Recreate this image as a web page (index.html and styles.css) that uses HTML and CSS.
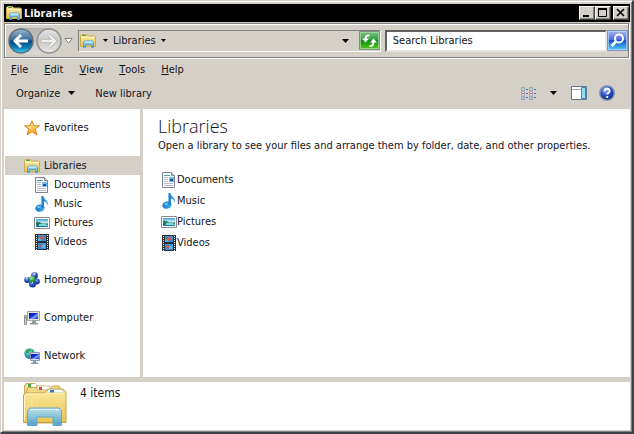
FILE: index.html
```html
<!DOCTYPE html>
<html lang="en">
<head>
<meta charset="utf-8">
<title>Libraries</title>
<link rel="stylesheet" href="styles.css">
</head>
<body>
<svg class="defs" aria-hidden="true">
  <defs>
    <linearGradient id="gold" x1="0" y1="0" x2="0" y2="1"><stop offset="0" stop-color="#fbeaa0"/><stop offset="1" stop-color="#e8c552"/></linearGradient>
    <linearGradient id="stand" x1="0" y1="0" x2="0" y2="1"><stop offset="0" stop-color="#b9e2f5"/><stop offset="1" stop-color="#3f9fd3"/></linearGradient>
    <linearGradient id="note" x1="0" y1="0" x2="1" y2="0"><stop offset="0" stop-color="#1878c8"/><stop offset="1" stop-color="#46b4f4"/></linearGradient>
    <linearGradient id="sky" x1="0" y1="0" x2="0" y2="1"><stop offset="0" stop-color="#3f9fdc"/><stop offset=".5" stop-color="#d8f4fa"/><stop offset=".6" stop-color="#2e8a6c"/><stop offset="1" stop-color="#1478a0"/></linearGradient>
    <linearGradient id="star" x1="0" y1="0" x2="0" y2="1"><stop offset="0" stop-color="#fff0a0"/><stop offset="1" stop-color="#fb9a18"/></linearGradient>
    <linearGradient id="backTop" x1="0" y1="0" x2="0" y2="1"><stop offset="0" stop-color="#9ab4cc"/><stop offset=".45" stop-color="#3a6e9c"/><stop offset=".5" stop-color="#084880"/><stop offset=".75" stop-color="#0878b4"/><stop offset="1" stop-color="#3cd0f4"/></linearGradient>
    <linearGradient id="fwdTop" x1="0" y1="0" x2="0" y2="1"><stop offset="0" stop-color="#e4e4e4"/><stop offset=".5" stop-color="#c8c8c6"/><stop offset="1" stop-color="#eae8e4"/></linearGradient>
    <linearGradient id="green" x1="0" y1="0" x2="0" y2="1"><stop offset="0" stop-color="#7cc088"/><stop offset=".45" stop-color="#30a040"/><stop offset=".5" stop-color="#0c8a14"/><stop offset="1" stop-color="#58cc20"/></linearGradient>
    <linearGradient id="find" x1="0" y1="0" x2="0" y2="1"><stop offset="0" stop-color="#b0b8f4"/><stop offset=".45" stop-color="#5070dc"/><stop offset=".5" stop-color="#1450cc"/><stop offset="1" stop-color="#50d4fc"/></linearGradient>
    <radialGradient id="ball" cx=".4" cy=".3" r=".7"><stop offset="0" stop-color="#a0b8f8"/><stop offset=".5" stop-color="#2c54c8"/><stop offset="1" stop-color="#102c88"/></radialGradient>
    <radialGradient id="leaf" cx=".4" cy=".3" r=".7"><stop offset="0" stop-color="#c0f4b0"/><stop offset=".5" stop-color="#30a848"/><stop offset="1" stop-color="#107030"/></radialGradient>
    <radialGradient id="earth" cx=".4" cy=".3" r=".7"><stop offset="0" stop-color="#c8f4ff"/><stop offset=".6" stop-color="#3098e0"/><stop offset="1" stop-color="#1050a0"/></radialGradient>
    <linearGradient id="screen" x1="0" y1="0" x2="1" y2="1"><stop offset="0" stop-color="#0818a0"/><stop offset=".45" stop-color="#1430d0"/><stop offset=".6" stop-color="#80a4f8"/><stop offset="1" stop-color="#1830c0"/></linearGradient>
  </defs>
  <symbol id="i-library" viewBox="0 0 16 14">
    <path d="M.5 12.500V1.500L1.500.5h5l1 1.500h7l1 1V12.500z" fill="url(#gold)" stroke="#c8a850"/>
    <path d="M2 1.500h4" stroke="#3cb43c"/><path d="M7 3.500h8M1 3.500h5" stroke="#fff8d0"/>
    <path d="M3.500 13.500V8.500l1-1.500h8l1 1.500v5h-2v-3h-6v3z" fill="url(#stand)" stroke="#48a4dc"/>
    <path d="M5 8h7" stroke="#e0f4fc"/>
  </symbol>
  <symbol id="i-doc" viewBox="0 0 16 16">
    <path d="M1.500.5h9l3 3v12h-12z" fill="#fff" stroke="#808488"/><path d="M10.500.5v3h3" fill="#e0e4e8" stroke="#808488"/>
    <path d="M3 3.500h6" stroke="#48a0a0"/><path d="M3 5.500h4M3 7.500h4M3 9.500h4M3 11.500h9M3 13.500h9" stroke="#b8b8d4"/>
    <path d="M8 5h5v5H8z" fill="#78b8e4"/><path d="M9 7h3v2H9z" fill="#2050a0"/>
  </symbol>
  <symbol id="i-music" viewBox="0 0 16 16">
    <ellipse cx="6" cy="12" rx="4.700" ry="3.700" transform="rotate(-15 6 12)" fill="url(#note)"/>
    <path d="M7.500 0h2c0 3.500 5.500 4.500 4.500 10-.4-2.500-2-4-4-4.400V12H7.500z" fill="url(#note)"/><ellipse cx="5" cy="11" rx="2" ry="1" fill="#78c4f4"/>
  </symbol>
  <symbol id="i-pic" viewBox="0 0 16 14">
    <path d="M.5 1.500h15v11H.5z" fill="#fff" stroke="#888c94"/><path d="M2 3h12v8H2z" fill="url(#sky)"/><path d="M2 6q3-1 6 1.500t6 0V9H2z" fill="#287850"/><path d="M5 8q4-1 9 1v1H5z" fill="#7cd8e0"/>
  </symbol>
  <symbol id="i-video" viewBox="0 0 16 16">
    <path d="M1 0h14v16H1z" fill="#283038"/><path d="M4 1h8v6H4zM4 9h8v6H4z" fill="#408cd0"/><path d="M7 2l2 1 2-1-1 3-3 1-3-2zM4 10l4 1 3-1-2 4-3-1z" fill="#c06048"/><path d="M4 4l3 1v2H4zM8 11l3-1v4H8z" fill="#58b4f4"/>
    <path d="M2.500 1v15M13.500 1v15" stroke="#e8f0f0" stroke-dasharray="1 1"/>
  </symbol>
  <symbol id="i-star" viewBox="0 0 16 16">
    <path d="M8 .8l2 5h5.500L11.200 9.200l1.700 5.800L8 11.700 3.100 15l1.700-5.800L.5 5.800H6z" fill="url(#star)" stroke="#d88420" stroke-linejoin="round"/><path d="M8 3.500L6.800 7H4l2.500 2z" fill="#fff8d0"/>
  </symbol>
  <symbol id="i-home" viewBox="0 0 16 16">
    <circle cx="3.200" cy="8" r="3" fill="url(#ball)"/><circle cx="10.500" cy="3.700" r="3.400" fill="url(#ball)"/><circle cx="12.800" cy="9.500" r="3" fill="url(#ball)"/><circle cx="8.500" cy="12" r="3.500" fill="url(#ball)"/><circle cx="8.300" cy="7.500" r="3.500" fill="url(#leaf)"/><path d="M2 6h2M9.500 2h2M8 11l1-1" stroke="#e8f4ff"/>
  </symbol>
  <symbol id="i-computer" viewBox="0 0 16 16">
    <path d="M.5 5.500h2v9h-2z" fill="#d0d4d0" stroke="#889088"/><path d="M1 7.500h1" stroke="#40b040"/>
    <path d="M3.500 1.500h12v9h-12z" fill="#e0e0dc" stroke="#a0a4a4"/><path d="M5 3h9v6H5z" fill="url(#screen)"/><path d="M8 11h4v2h2v1.500H6V13h2z" fill="#909898"/>
  </symbol>
  <symbol id="i-network" viewBox="0 0 16 16">
    <circle cx="5.500" cy="5.500" r="5.200" fill="url(#earth)"/><path d="M2 2q3-2 5 0L5 5 2 6zM1 7l4 1-1 2zM8 1l2 3H8z" fill="#30ac50"/>
    <path d="M6.500 4.500h9v8h-9z" fill="#d8dce4" stroke="#8898b0"/><path d="M7 6h8v5H7z" fill="url(#screen)"/><path d="M9 13h3v1.500h2V16H7v-1.500h2z" fill="#8c98a4"/>
  </symbol>
  <symbol id="i-down" viewBox="0 0 7 4"><path d="M0 0h7L3.500 4z"/></symbol>
</svg>

<div class="window">
  <header class="titlebar">
    <svg class="icon library"><use href="#i-library"/></svg>
    <h1 class="title">Libraries</h1>
    <div class="captions">
      <button class="caption" aria-label="Minimize"><svg viewBox="0 0 12 10"><path d="M2 8h6" stroke="#000" stroke-width="2"/></svg></button>
      <button class="caption" aria-label="Maximize"><svg viewBox="0 0 12 10"><path d="M1.500 1v7.500h8V1M1 1h9" fill="none" stroke="#000"/><path d="M1 1h9" stroke="#000" stroke-width="2"/></svg></button>
      <button class="caption close" aria-label="Close"><svg viewBox="0 0 12 10"><path d="M2 1l7 7M9 1L2 8" stroke="#000" stroke-width="1.600"/></svg></button>
    </div>
  </header>

  <div class="navbar">
    <div class="travel">
      <button class="round" aria-label="Back"><svg viewBox="0 0 26 26"><circle cx="13" cy="13" r="12" fill="url(#backTop)" stroke="#607080" stroke-width="1.500"/><path d="M13 7l-6 6 6 6M7.500 13H20" fill="none" stroke="#fff" stroke-width="2.800"/></svg></button>
      <button class="round" aria-label="Forward"><svg viewBox="0 0 26 26"><circle cx="13" cy="13" r="12" fill="url(#fwdTop)" stroke="#909090" stroke-width="1.500"/><path d="M13 7l6 6-6 6M18.500 13H6" fill="none" stroke="#b4b4b4" stroke-width="4"/><path d="M13 7l6 6-6 6M18.500 13H6" fill="none" stroke="#eeeeec" stroke-width="2.400"/></svg></button>
    </div>
    <button class="recent" aria-label="Recent pages"><svg viewBox="0 0 9 6"><path d="M.8.5h7.400L4.500 5z" fill="#fff" stroke="#808080"/></svg></button>
    <div class="address">
      <svg class="icon library"><use href="#i-library"/></svg>
      <button class="drop small" aria-label="Locations"><svg><use href="#i-down"/></svg></button>
      <a class="crumb" href="#libraries">Libraries</a>
      <button class="drop small" aria-label="Sub-locations"><svg><use href="#i-down"/></svg></button>
      <button class="drop history" aria-label="Previous locations"><svg><use href="#i-down"/></svg></button>
      <button class="refresh" aria-label="Refresh"><svg viewBox="0 0 21 19"><path d="M.5.5h20v18H.5z" fill="url(#green)" stroke="#809080"/><path d="M1.500 1.500h18v16h-18z" fill="none" stroke="#b0e0a8" stroke-opacity=".7"/><path d="M10.500 4.500Q6.500 4 6.500 8" fill="none" stroke="#fff" stroke-width="2"/><path d="M3 7.500h7L6.500 11.500z" fill="#fff"/><path d="M10.500 15q4 .5 4-4" fill="none" stroke="#fff" stroke-width="2"/><path d="M11 11.500h7l-3.500-4z" fill="#fff"/></svg></button>
    </div>
    <form class="search">
      <input class="query" type="text" aria-label="Search Libraries" placeholder="Search Libraries">
      <button class="find" type="button" aria-label="Search"><svg viewBox="0 0 21 21"><path d="M.5.5h20v20H.5z" fill="url(#find)" stroke="#8090c0"/><path d="M1.500 1.500h18v18h-18z" fill="none" stroke="#c0dcff" stroke-opacity=".7"/><circle cx="12" cy="8.500" r="4" fill="none" stroke="#fff" stroke-width="2"/><path d="M9 11.500L4.500 16" stroke="#fff" stroke-width="3"/></svg></button>
    </form>
  </div>

  <nav class="menubar">
    <button><u>F</u>ile</button><button><u>E</u>dit</button><button><u>V</u>iew</button><button><u>T</u>ools</button><button><u>H</u>elp</button>
  </nav>

  <div class="toolbar">
    <button class="tool">Organize <svg class="arrow"><use href="#i-down"/></svg></button>
    <button class="tool">New library</button>
    <div class="views">
      <button aria-label="Change view"><svg width="15" height="13" viewBox="0 0 15 13"><path d="M0 0h4v4H0zM0 4.500h4v4H0zM0 9h4v4H0zM8 0h4v4H8zM8 4.500h4v4H8zM8 9h4v4H8z" fill="#98a8bc"/><path d="M1 1h2v2H1zM1 5h2v3H1zM1 10h2v2H1zM9 1h2v2H9zM9 5h2v3H9zM9 10h2v2H9z" fill="#fff"/><path d="M5 2.500h2M5 6.500h2M5 10.500h2M13 2.500h2M13 6.500h2M13 10.500h2" stroke="#607088"/><path d="M1.500 2h1M9.500 2h1" stroke="#30a060" stroke-width="1.500"/><path d="M1.200 6.500h1.600M9.200 6.500h1.600" stroke="#e02020" stroke-width="1.600"/><path d="M1.500 11h1M9.500 11h1" stroke="#3060c8" stroke-width="1.500"/></svg></button>
      <button aria-label="More view options"><svg class="arrow"><use href="#i-down"/></svg></button>
      <button aria-label="Show the preview pane"><svg width="16" height="14" viewBox="0 0 16 14"><path d="M.5.500h15v13H.5z" fill="#fff" stroke="#5c7890"/><path d="M1 3.500h9" stroke="#a0b0c0"/><path d="M10.500 1.500h4v11h-4z" fill="#90dcf4" stroke="#3c8cb0"/></svg></button>
      <button aria-label="Get help"><svg class="help" width="16" height="16" viewBox="0 0 16 16"><circle cx="8" cy="8" r="7.300" fill="url(#ball)" stroke="#8c98b0" stroke-width="1.400"/><path d="M5.600 6.300C5.600 3 10.600 3 10.600 5.900 10.600 7.600 8.200 7.700 8.200 9.600M8.200 11v2" fill="none" stroke="#fff" stroke-width="1.900"/></svg></button>
    </div>
  </div>

  <div class="body">
    <nav class="tree">
      <ul>
        <li class="group"><a href="#favorites"><svg class="icon"><use href="#i-star"/></svg>Favorites</a></li>
        <li class="group"><a class="current" href="#libraries"><svg class="icon library"><use href="#i-library"/></svg>Libraries</a>
          <ul class="sub">
            <li><a href="#documents"><svg class="icon"><use href="#i-doc"/></svg>Documents</a></li>
            <li><a href="#music"><svg class="icon"><use href="#i-music"/></svg>Music</a></li>
            <li><a href="#pictures"><svg class="icon"><use href="#i-pic"/></svg>Pictures</a></li>
            <li><a href="#videos"><svg class="icon"><use href="#i-video"/></svg>Videos</a></li>
          </ul></li>
        <li class="group"><a href="#homegroup"><svg class="icon"><use href="#i-home"/></svg>Homegroup</a></li>
        <li class="group"><a href="#computer"><svg class="icon"><use href="#i-computer"/></svg>Computer</a></li>
        <li class="group"><a href="#network"><svg class="icon"><use href="#i-network"/></svg>Network</a></li>
      </ul>
    </nav>
    <main class="content">
      <h2>Libraries</h2>
      <p>Open a library to see your files and arrange them by folder, date, and other properties.</p>
      <ul class="items">
        <li><a href="#documents"><svg class="icon"><use href="#i-doc"/></svg>Documents</a></li>
        <li><a href="#music"><svg class="icon"><use href="#i-music"/></svg>Music</a></li>
        <li><a href="#pictures"><svg class="icon"><use href="#i-pic"/></svg>Pictures</a></li>
        <li><a href="#videos"><svg class="icon"><use href="#i-video"/></svg>Videos</a></li>
      </ul>
    </main>
  </div>

  <footer class="details">
    <svg class="big" viewBox="0 0 46 44">
      <path d="M2.500 40V4L4 1.500h9L15 4h6v36z" fill="#f0dc90" stroke="#c8a850"/><path d="M5 2h9v3H5z" fill="#fff"/><path d="M6 2h3v3H6z" fill="#48a848"/>
      <path d="M4.500 41V8L6 5.500h22L31 4h6l2 3v34z" fill="#f0d880" stroke="#c8a850"/><path d="M15 4h13v4H15z" fill="#fff" stroke="#d0c090"/><path d="M17 5h3v3h-3z" fill="#e05030"/>
      <path d="M1.500 40.500V13l2-2h19l3-4H41l3 3v30.500z" fill="url(#gold)" stroke="#c8a048"/><path d="M26 7.500h14l2 3H25z" fill="#fff" stroke="#c8c8b8"/><path d="M28 8h4v3h-4z" fill="#3078c0"/>
      <path d="M2.500 38V13.500l1.500-1.500h19l2-1h17" fill="none" stroke="#fff4c0"/>
      <path d="M10 20v18M2 29h18M4 23l13 13M16 23L5 34" stroke="#fff" stroke-opacity=".4"/>
      <path d="M5.500 43.500V29l2.500-3h29l2.500 3v14.500H31V35H15v8.500z" fill="url(#stand)" fill-opacity=".9" stroke="#60a8d0"/><path d="M8 27.500h29" stroke="#e4f6fd"/>
    </svg>
    <span class="count">4 items</span>
  </footer>
</div>
</body>
</html>
```
FILE: styles.css
```css
* { box-sizing: border-box; }

body {
  margin: 0;
  background: #d4d0c8;
  color: #14141c;
  font: 11px/19px "DejaVu Sans Condensed", "DejaVu Sans", sans-serif;
}

h1, h2, p, ul { margin: 0; padding: 0; font-weight: normal; }
ul { list-style: none; }
a { color: inherit; text-decoration: none; }
button {
  display: flex;
  align-items: center;
  padding: 0;
  border: 0;
  background: none;
  color: inherit;
  font: inherit;
}
svg { display: block; flex: none; }
.defs { position: absolute; width: 0; height: 0; }
.icon { width: 16px; height: 16px; }
.icon.library { height: 14px; }
.arrow { width: 7px; height: 4px; }

.window {
  display: flex;
  flex-direction: column;
  min-height: 100vh;
  padding: 3px 2px 2px 3px;
  border: solid;
  border-width: 1px 2px 2px 1px;
  border-color: #d4d0c8 #404048 #404048 #d4d0c8;
  box-shadow: inset 1px 1px #fff, inset -1px -1px #808080;
}

.titlebar {
  display: flex;
  align-items: center;
  height: 18px;
  padding: 0 1px 0 2px;
  background: #000;
  color: #fff;
}
.title { flex: 1; padding-left: 2px; font: bold 11px/18px "Open Sans", "Noto Sans", sans-serif; }
.captions { display: flex; }
.caption {
  width: 16px;
  height: 14px;
  padding: 1px;
  border: 1px solid;
  border-color: #fff #404040 #404040 #fff;
  background: #d4d0c8;
  box-shadow: inset -1px -1px #808080;
}
.caption svg { width: 12px; height: 10px; }
.close { margin-left: 2px; }

.navbar {
  display: flex;
  align-items: center;
  height: 35px;
  margin: 1px 1px 0 0;
  padding: 0 0 0 3px;
  border: 1px solid #808080;
  box-shadow: inset 1px 1px #fff, 1px 1px #fff;
}
.travel {
  display: flex;
  gap: 2px;
  border-radius: 13px;
  background: linear-gradient(#b4b2ae, #dcdad6);
}
.round svg { width: 26px; height: 26px; }
.recent { margin: 0 5px 0 2px; }
.recent svg { width: 9px; height: 6px; }
.address {
  display: flex;
  flex: 302;
  align-items: center;
  height: 22px;
  padding-left: 1px;
  border: 1px solid;
  border-color: #808080 #fff #fff #808080;
}
.drop svg { width: 7px; height: 4px; }
.drop.small { margin: 0 5px; }
.drop.small svg { width: 5px; height: 3px; }
.icon + .drop.small { margin-left: 7px; }
.history { margin: 0 10px 0 auto; }
.refresh svg { width: 21px; height: 19px; }
.search { display: flex; flex: 245; margin-left: 4px; }
.query {
  flex: 1;
  min-width: 0;
  height: 22px;
  padding: 0 6px;
  border: 2px solid;
  border-color: #606060 #e8e4dc #e8e4dc #606060;
  background: #fff;
  color: inherit;
  font: inherit;
}
.query::placeholder { color: inherit; opacity: 1; }
.find svg { width: 21px; height: 21px; }

.menubar { display: flex; gap: 16px; padding: 2px 7px 0; }

.toolbar {
  display: flex;
  align-items: center;
  gap: 20px;
  height: 30px;
  padding: 0 15px 2px 12px;
}
.tool { gap: 8px; }
.views { display: flex; align-items: center; gap: 14px; margin-left: auto; }
.help { margin-left: -2px; }

.body { display: flex; flex: 1; gap: 3px; }
.tree { flex: 0 0 136px; padding: 9px 0 0 1px; background: #fff; }
.group + .group { margin-top: 19px; }
.tree a { display: flex; align-items: center; gap: 4px; height: 19px; padding-left: 19px; }
.tree .sub a { padding-left: 29px; }
.tree .current { background: #d4d0c8; }
.content { flex: 1; padding: 5px 15px; background: #fff; }
.content h2 { font: 300 18px/24px "Open Sans", "Noto Sans", sans-serif; }
.content p { line-height: 16px; }
.items { padding: 15px 0 0 3px; }
.items a { display: flex; align-items: center; height: 21px; }

.details {
  display: flex;
  gap: 12px;
  height: 48px;
  margin-top: 5px;
  padding-left: 18px;
  background: #fff;
  font-size: 12px;
  line-height: 23px;
}
.big { width: 46px; height: 44px; }
```
